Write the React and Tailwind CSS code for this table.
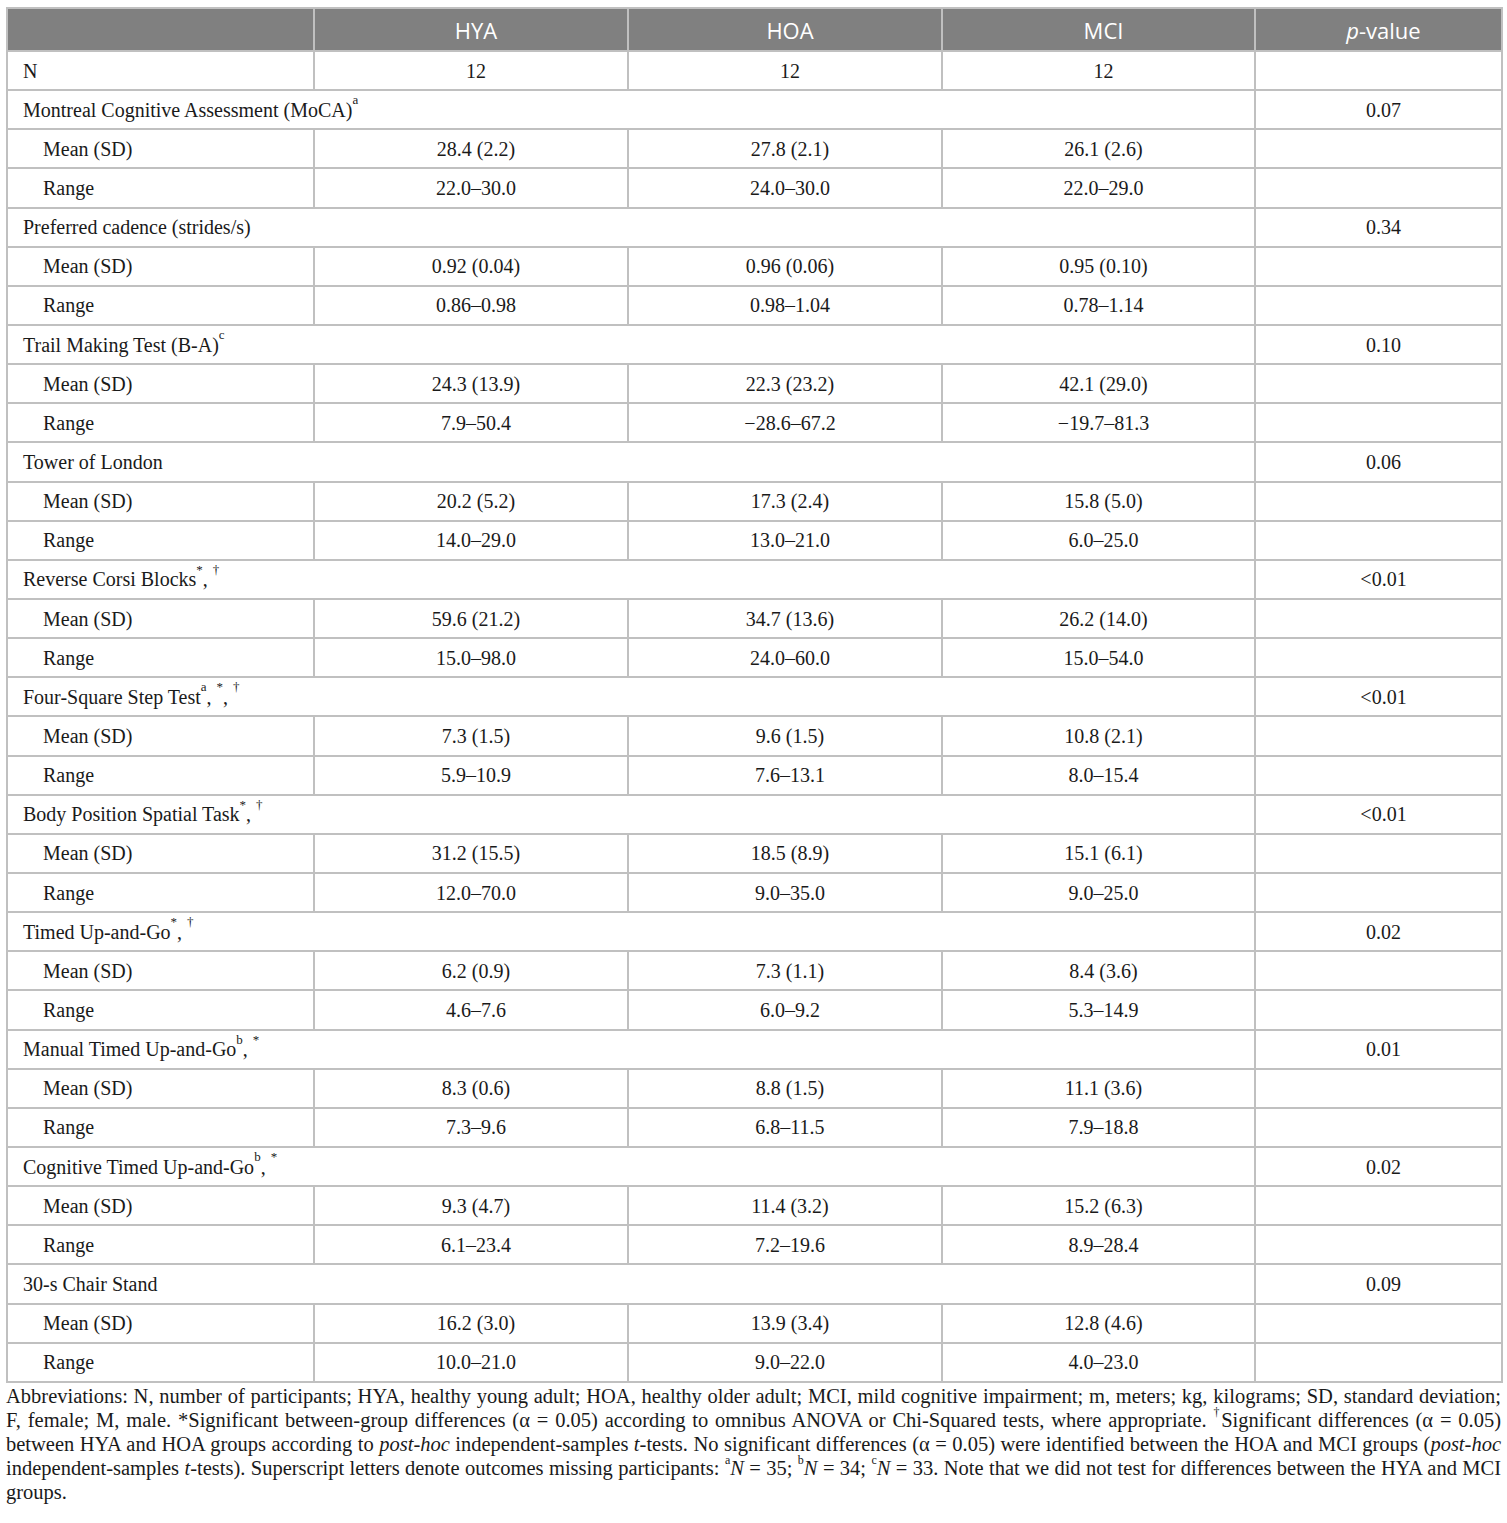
import React from "react";

const groups = [
  { label: <>Montreal Cognitive Assessment (MoCA)<sup>a</sup></>, p: "0.07", mean: ["28.4 (2.2)", "27.8 (2.1)", "26.1 (2.6)"], range: ["22.0–30.0", "24.0–30.0", "22.0–29.0"] },
  { label: <>Preferred cadence (strides/s)</>, p: "0.34", mean: ["0.92 (0.04)", "0.96 (0.06)", "0.95 (0.10)"], range: ["0.86–0.98", "0.98–1.04", "0.78–1.14"] },
  { label: <>Trail Making Test (B-A)<sup>c</sup></>, p: "0.10", mean: ["24.3 (13.9)", "22.3 (23.2)", "42.1 (29.0)"], range: ["7.9–50.4", "−28.6–67.2", "−19.7–81.3"] },
  { label: <>Tower of London</>, p: "0.06", mean: ["20.2 (5.2)", "17.3 (2.4)", "15.8 (5.0)"], range: ["14.0–29.0", "13.0–21.0", "6.0–25.0"] },
  { label: <>Reverse Corsi Blocks<sup>*</sup>, <sup>†</sup></>, p: "<0.01", mean: ["59.6 (21.2)", "34.7 (13.6)", "26.2 (14.0)"], range: ["15.0–98.0", "24.0–60.0", "15.0–54.0"] },
  { label: <>Four-Square Step Test<sup>a</sup>, <sup>*</sup>, <sup>†</sup></>, p: "<0.01", mean: ["7.3 (1.5)", "9.6 (1.5)", "10.8 (2.1)"], range: ["5.9–10.9", "7.6–13.1", "8.0–15.4"] },
  { label: <>Body Position Spatial Task<sup>*</sup>, <sup>†</sup></>, p: "<0.01", mean: ["31.2 (15.5)", "18.5 (8.9)", "15.1 (6.1)"], range: ["12.0–70.0", "9.0–35.0", "9.0–25.0"] },
  { label: <>Timed Up-and-Go<sup>*</sup>, <sup>†</sup></>, p: "0.02", mean: ["6.2 (0.9)", "7.3 (1.1)", "8.4 (3.6)"], range: ["4.6–7.6", "6.0–9.2", "5.3–14.9"] },
  { label: <>Manual Timed Up-and-Go<sup>b</sup>, <sup>*</sup></>, p: "0.01", mean: ["8.3 (0.6)", "8.8 (1.5)", "11.1 (3.6)"], range: ["7.3–9.6", "6.8–11.5", "7.9–18.8"] },
  { label: <>Cognitive Timed Up-and-Go<sup>b</sup>, <sup>*</sup></>, p: "0.02", mean: ["9.3 (4.7)", "11.4 (3.2)", "15.2 (6.3)"], range: ["6.1–23.4", "7.2–19.6", "8.9–28.4"] },
  { label: <>30-s Chair Stand</>, p: "0.09", mean: ["16.2 (3.0)", "13.9 (3.4)", "12.8 (4.6)"], range: ["10.0–21.0", "9.0–22.0", "4.0–23.0"] },
];

const td = "border-2 border-[#c0c0c0] h-[39.15px] p-0 align-middle";
const tdc = `${td} text-center pl-[10px]`;

const SubRow = ({ name, values }) => (
  <tr>
    <td className={`${td} pl-[35px] text-left`}>{name}</td>
    {values.map((v, i) => (
      <td key={i} className={tdc}>{v}</td>
    ))}
    <td className={td}></td>
  </tr>
);

const line = "text-justify [text-align-last:justify] whitespace-nowrap";

export default function App() {
  return (
    <div className="bg-white min-h-[1523px] pt-[7px] px-[6px] text-[#1a1a1a]" style={{ fontFamily: '"Liberation Serif", serif' }}>
      <table className="border-collapse w-[1495px] table-fixed text-[20px] leading-none [&_sup]:text-[13px] [&_sup]:leading-none [&_sup]:align-[6px]">
        <colgroup>
          <col className="w-[307px]" />
          <col className="w-[314px]" />
          <col className="w-[314px]" />
          <col className="w-[313px]" />
          <col className="w-[247px]" />
        </colgroup>
        <thead>
          <tr className="bg-[#808080] text-white text-[22px] leading-none font-['Open_Sans',sans-serif]">
            <th className="border-2 border-[#c0c0c0] h-[43px] p-0 font-normal"></th>
            <th className="border-2 border-[#c0c0c0] p-0 font-normal pl-[10px]">HYA</th>
            <th className="border-2 border-[#c0c0c0] p-0 font-normal pl-[10px]">HOA</th>
            <th className="border-2 border-[#c0c0c0] p-0 font-normal pl-[10px]">MCI</th>
            <th className="border-2 border-[#c0c0c0] p-0 font-normal pl-[10px]"><i>p</i>-value</th>
          </tr>
        </thead>
        <tbody>
          <tr>
            <td className={`${td} pl-[15px]`}>N</td>
            <td className={tdc}>12</td>
            <td className={tdc}>12</td>
            <td className={tdc}>12</td>
            <td className={td}></td>
          </tr>
          {groups.map((g, i) => (
            <React.Fragment key={i}>
              <tr>
                <td colSpan={4} className={`${td} pl-[15px]`}>{g.label}</td>
                <td className={tdc}>{g.p}</td>
              </tr>
              <SubRow name="Mean (SD)" values={g.mean} />
              <SubRow name="Range" values={g.range} />
            </React.Fragment>
          ))}
        </tbody>
      </table>
      <div className="w-[1495px] mt-[1px] text-[20.5px] leading-[24px] [&_sup]:text-[12px] [&_sup]:leading-none [&_sup]:align-[5px]">
        <div className={line}>Abbreviations: N, number of participants; HYA, healthy young adult; HOA, healthy older adult; MCI, mild cognitive impairment; m, meters; kg, kilograms; SD, standard deviation;</div>
        <div className={line}>F, female; M, male. *Significant between-group differences (α = 0.05) according to omnibus ANOVA or Chi-Squared tests, where appropriate. <sup>†</sup>Significant differences (α = 0.05)</div>
        <div className={line}>between HYA and HOA groups according to <i>post-hoc</i> independent-samples <i>t</i>-tests. No significant differences (α = 0.05) were identified between the HOA and MCI groups (<i>post-hoc</i></div>
        <div className={line}>independent-samples <i>t</i>-tests). Superscript letters denote outcomes missing participants: <sup>a</sup><i>N</i> = 35; <sup>b</sup><i>N</i> = 34; <sup>c</sup><i>N</i> = 33. Note that we did not test for differences between the HYA and MCI</div>
        <div>groups.</div>
      </div>
    </div>
  );
}
